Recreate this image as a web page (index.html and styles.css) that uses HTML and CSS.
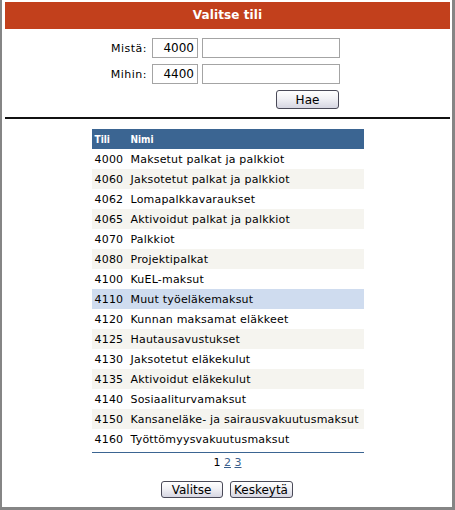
FILE: index.html
```html
<!DOCTYPE html>
<html>
<head>
<meta charset="utf-8">
<link rel="stylesheet" href="styles.css">
</head>
<body>
<div class="frame">
  <div class="title">Valitse tili</div>
  <div class="search">
    <label class="lbl">Mistä:</label>
    <input class="num" type="text" value="4000">
    <input class="txt" type="text" value="">
    <label class="lbl">Mihin:</label>
    <input class="num" type="text" value="4400">
    <input class="txt" type="text" value="">
    <div class="hae-cell"><button class="btn hae">Hae</button></div>
  </div>
  <div class="divider"></div>
  <table class="accounts">
    <thead>
      <tr><th class="c1">Tili</th><th class="c2">Nimi</th></tr>
    </thead>
    <tbody>
      <tr><td class="c1">4000</td><td class="c2">Maksetut palkat ja palkkiot</td></tr>
      <tr class="alt"><td class="c1">4060</td><td class="c2">Jaksotetut palkat ja palkkiot</td></tr>
      <tr><td class="c1">4062</td><td class="c2">Lomapalkkavaraukset</td></tr>
      <tr class="alt"><td class="c1">4065</td><td class="c2">Aktivoidut palkat ja palkkiot</td></tr>
      <tr><td class="c1">4070</td><td class="c2">Palkkiot</td></tr>
      <tr class="alt"><td class="c1">4080</td><td class="c2">Projektipalkat</td></tr>
      <tr><td class="c1">4100</td><td class="c2">KuEL-maksut</td></tr>
      <tr class="sel"><td class="c1">4110</td><td class="c2">Muut työeläkemaksut</td></tr>
      <tr><td class="c1">4120</td><td class="c2">Kunnan maksamat eläkkeet</td></tr>
      <tr class="alt"><td class="c1">4125</td><td class="c2">Hautausavustukset</td></tr>
      <tr><td class="c1">4130</td><td class="c2">Jaksotetut eläkekulut</td></tr>
      <tr class="alt"><td class="c1">4135</td><td class="c2">Aktivoidut eläkekulut</td></tr>
      <tr><td class="c1">4140</td><td class="c2">Sosiaaliturvamaksut</td></tr>
      <tr class="alt"><td class="c1">4150</td><td class="c2">Kansaneläke- ja sairausvakuutusmaksut</td></tr>
      <tr><td class="c1">4160</td><td class="c2">Työttömyysvakuutusmaksut</td></tr>
    </tbody>
  </table>
  <div class="tline"></div>
  <div class="pager">1 <a href="#">2</a> <a href="#">3</a></div>
  <div class="actions">
    <button class="btn">Valitse</button>
    <button class="btn">Keskeytä</button>
  </div>
</div>
</body>
</html>
```
FILE: styles.css
```css
html, body {
  margin: 0;
  padding: 0;
  background: #ffffff;
}
body {
  font-family: "DejaVu Sans", Verdana, sans-serif;
  font-size: 11px;
  color: #000;
}
.frame {
  box-sizing: border-box;
  width: 455px;
  height: 510px;
  border-left: 2px solid #858585;
  border-right: 3px solid #858585;
  border-bottom: 3px solid #858585;
  padding: 2px 2px 0 3px;
  display: flex;
  flex-direction: column;
}
.title {
  height: 27px;
  line-height: 26px;
  background: #c2401c;
  color: #fff;
  font-weight: bold;
  font-size: 12px;
  letter-spacing: 0.1px;
  text-align: center;
}
.search {
  margin-top: 9px;
  margin-left: 83px;
  display: grid;
  grid-template-columns: 60px 46px 138px;
  column-gap: 4px;
  row-gap: 6px;
  align-items: center;
}
.lbl {
  text-align: right;
  padding-right: 1px;
  font-size: 11px;
  letter-spacing: 0.5px;
}
.search input {
  box-sizing: border-box;
  height: 20px;
  margin: 0;
  border: 1px solid #a4a4a4;
  font-family: "DejaVu Sans", Verdana, sans-serif;
  font-size: 12px;
  padding: 0 3px;
  background: #fff;
  color: #000;
  outline: none;
}
.num {
  width: 46px;
  text-align: right;
}
.txt {
  width: 138px;
}
.hae-cell {
  grid-column: 1 / 4;
  display: flex;
  justify-content: flex-end;
  padding-right: 1px;
}
.btn {
  box-sizing: border-box;
  margin: 0;
  padding: 0 2px;
  font-family: "DejaVu Sans", Verdana, sans-serif;
  font-size: 12px;
  color: #000;
  border: 1px solid #4a4a58;
  border-radius: 3px;
  background: linear-gradient(#ffffff, #f1f1f5 45%, #d6d6e2);
  height: 17px;
  line-height: 14px;
}
.hae {
  width: 63px;
  height: 19px;
  line-height: 16px;
}
.divider {
  margin-top: 8px;
  height: 2px;
  background: #111;
}
.accounts {
  margin: 10px auto 0;
  width: 272px;
  border-collapse: collapse;
  border-spacing: 0;
}
.accounts th {
  height: 20px;
  padding: 0 0 0 3px;
  background: #3b6592;
  color: #fff;
  font-family: "DejaVu Sans Condensed", "DejaVu Sans", sans-serif;
  font-size: 10px;
  font-weight: bold;
  text-align: left;
}
.accounts td {
  height: 20px;
  padding: 0 0 0 3px;
  font-size: 11px;
  letter-spacing: 0.2px;
  white-space: nowrap;
}
.accounts .c1 {
  width: 35px;
  padding-left: 3px;
}
.accounts .c2 {
  padding-left: 1px;
}
.accounts tr.alt td {
  background: #f5f4ef;
}
.accounts tr.sel td {
  background: #cfdcef;
}
.tline {
  margin: 3px auto 0;
  width: 272px;
  height: 1px;
  background: #3b6592;
}
.pager {
  margin-top: 3px;
  height: 14px;
  line-height: 14px;
  text-align: center;
  font-size: 11px;
}
.pager a {
  color: #3b5f8c;
  text-decoration: underline;
}
.actions {
  margin-top: 11px;
  display: flex;
  justify-content: center;
  gap: 7px;
  padding-right: 2px;
}
.actions .btn:first-child {
  width: 62px;
}
.actions .btn:last-child {
  width: 63px;
}
```
